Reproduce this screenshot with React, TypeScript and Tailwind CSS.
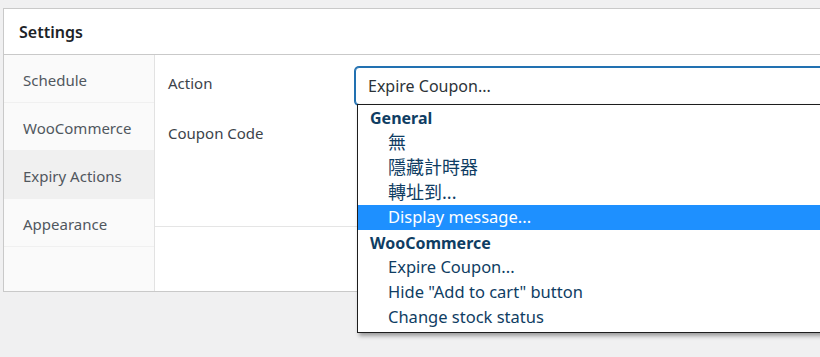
import React from "react";

const font = {
  fontFamily: '"Noto Sans", "Noto Sans CJK TC", "Liberation Sans", sans-serif',
};

const tabs = ["Schedule", "WooCommerce", "Expiry Actions", "Appearance"];

const groups = [
  { label: "General", items: ["無", "隱藏計時器", "轉址到...", "Display message..."] },
  {
    label: "WooCommerce",
    items: ["Expire Coupon...", 'Hide "Add to cart" button', "Change stock status"],
  },
];

const isCjk = (s: string) => /[\u4e00-\u9fff]/.test(s);

function Dropdown() {
  return (
    <div className="absolute left-[2px] top-[37px] z-10 w-[600px] border border-[#1d1d1d] bg-white pb-[2px] shadow-[2px_3px_4px_rgba(0,0,0,0.35)]">
      {groups.map((g) => (
        <div key={g.label}>
          <div className="flex h-[25px] items-center pl-[12px] text-[16px] font-bold text-[#0f3d63]">
            {g.label}
          </div>
          {g.items.map((item) => {
            const active = item === "Display message...";
            return (
              <div
                key={item}
                className={
                  active
                    ? "flex h-[25px] items-center bg-[#1e90ff] pl-[30px] text-[16.5px] text-white"
                    : "flex h-[25px] items-center pl-[30px] text-[16.5px] text-[#0f3d63]"
                }
              >
                <span className={isCjk(item) ? "text-[18px] leading-[25px]" : ""}>{item}</span>
              </div>
            );
          })}
        </div>
      ))}
    </div>
  );
}

export default function App() {
  return (
    <div className="h-[357px] w-[820px] overflow-hidden bg-[#f0f0f1] pl-[3px] pt-[8px]" style={font}>
      <div className="w-[860px] border border-[#c9c9c9] bg-white">
        <div className="flex h-[46px] items-center border-b border-[#c9c9c9] pl-[15px] text-[16px] font-semibold text-[#1d2327]">
          Settings
        </div>
        <div className="flex h-[236px]">
          <div className="w-[151px] shrink-0 border-r border-[#e2e2e2] bg-[#fafafa]">
            {tabs.map((t) => (
              <div
                key={t}
                className={
                  t === "Expiry Actions"
                    ? "flex h-[48px] items-center border-b border-[#f0f0f0] bg-[#f0f0f0] pl-[19px] pt-[4px] text-[15px] text-[#50575e]"
                    : "flex h-[48px] items-center border-b border-[#f0f0f0] pl-[19px] pt-[4px] text-[15px] text-[#50575e]"
                }
              >
                {t}
              </div>
            ))}
          </div>
          <div className="min-w-0 flex-1">
            <div className="h-[172px] border-b border-[#e5e5e5] pt-[12px]">
              <div className="flex items-start">
                <div className="mt-[5px] w-[200px] shrink-0 pl-[13px] text-[15px] leading-[22px] text-[#3c434a]">
                  Action
                </div>
                <div className="relative">
                  <div className="flex h-[38px] w-[520px] items-center rounded-[4px] border border-[#2271b1] bg-white pl-[12px] text-[16px] text-[#2c3338] shadow-[0_0_0_1px_#2271b1]">
                    Expire Coupon...
                  </div>
                  <Dropdown />
                </div>
              </div>
              <div className="mt-[17px] flex items-center">
                <div className="w-[200px] pl-[13px] text-[15px] leading-[22px] text-[#3c434a]">
                  Coupon Code
                </div>
              </div>
            </div>
          </div>
        </div>
      </div>
    </div>
  );
}
